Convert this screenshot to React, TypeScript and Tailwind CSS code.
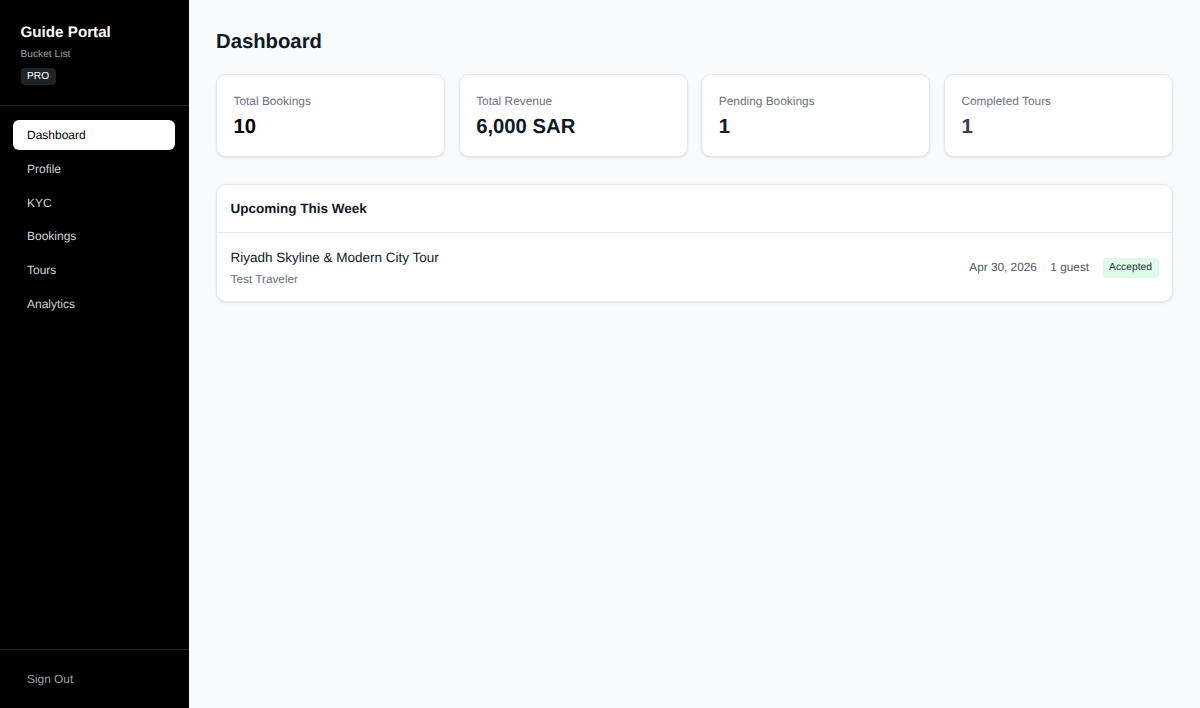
import React from 'react';

const NAV_ITEMS = ['Dashboard', 'Profile', 'KYC', 'Bookings', 'Tours', 'Analytics'];

const STATS = [
  { label: 'Total Bookings', value: '10', color: 'text-black' },
  { label: 'Total Revenue', value: '6,000 SAR', color: 'text-[#111827]' },
  { label: 'Pending Bookings', value: '1', color: 'text-[#111827]' },
  { label: 'Completed Tours', value: '1', color: 'text-[#374151]' },
];

function Sidebar() {
  return (
    <aside className="w-[189px] shrink-0 bg-black flex flex-col h-[708px]">
      <div className="h-[106px] shrink-0 pt-[23px] pl-[20.5px] border-b border-[#22252b]">
        <div className="text-[15.2px] leading-[19px] font-bold text-white">Guide Portal</div>
        <div className="mt-[6px] text-[10.2px] leading-[13px] text-[#9ca3af]">Bucket List</div>
        <span className="mt-[6.5px] block w-fit rounded-[4px] bg-[#1f2329] px-[6.5px] text-[10.2px] leading-[17px] text-white">PRO</span>
      </div>
      <nav className="flex-1 flex flex-col gap-[3.25px] pl-[13px] pr-[14px] pt-[13.5px]">
        {NAV_ITEMS.map((item, i) => (
          <div
            key={item}
            className={`h-[30.5px] flex items-center rounded-[6px] px-[14px] text-[12px] pt-[0.5px] ${
              i === 0 ? 'bg-white text-black' : 'text-[#d1d5db]'
            }`}
          >
            {item}
          </div>
        ))}
      </nav>
      <div className="h-[59px] shrink-0 border-t border-[#22252b] pl-[27px] pt-[22px] text-[11.9px] leading-[15px] text-[#9ca3af]">
        Sign Out
      </div>
    </aside>
  );
}

function StatCard({ label, value, color }: { label: string; value: string; color: string }) {
  return (
    <div className="h-[83px] bg-white border border-[#e5e7eb] rounded-[10px] shadow-[0_1px_3px_rgba(0,0,0,0.1)] pl-[16.5px] pt-[19px]">
      <div className="text-[11.9px] leading-[15px] text-[#6b7280]">{label}</div>
      <div className={`mt-[6px] text-[20.3px] leading-[25px] font-bold ${color}`}>{value}</div>
    </div>
  );
}

export default function App() {
  return (
    <div className="flex h-[708px] w-[1200px] overflow-hidden bg-[#f9fafb] [text-rendering:geometricPrecision] font-['Liberation_Sans',Arial,sans-serif]">
      <Sidebar />
      <main className="flex-1 px-[27px] pt-[29px]">
        <h1 className="text-[20.3px] leading-[27px] font-bold text-[#111827]">Dashboard</h1>
        <div className="mt-[18px] grid grid-cols-4 gap-[13.5px]">
          {STATS.map((s) => (
            <StatCard key={s.label} label={s.label} value={s.value} color={s.color} />
          ))}
        </div>
        <section className="mt-[27px] bg-white border border-[#e5e7eb] rounded-[10px] shadow-[0_1px_3px_rgba(0,0,0,0.1)]">
          <div className="h-[48px] flex items-center px-[13.5px] pt-[1px] border-b border-[#e5e7eb]">
            <h2 className="text-[13.5px] font-bold text-[#111827]">Upcoming This Week</h2>
          </div>
          <div className="h-[68px] flex items-center justify-between px-[13.5px] pt-[2px]">
            <div>
              <div className="text-[13.5px] leading-[17px] text-[#111827]">Riyadh Skyline &amp; Modern City Tour</div>
              <div className="mt-[6.5px] text-[11.8px] leading-[15px] text-[#6b7280]">Test Traveler</div>
            </div>
            <div className="flex items-center gap-[13.5px]">
              <span className="text-[11.8px] text-[#4b5563]">Apr 30, 2026</span>
              <span className="text-[11.8px] text-[#4b5563]">1 guest</span>
              <span className="h-[20px] flex items-center rounded-[4px] bg-[#dcfce7] px-[6.5px] text-[10.3px] text-[#1f2937]">Accepted</span>
            </div>
          </div>
        </section>
      </main>
    </div>
  );
}
